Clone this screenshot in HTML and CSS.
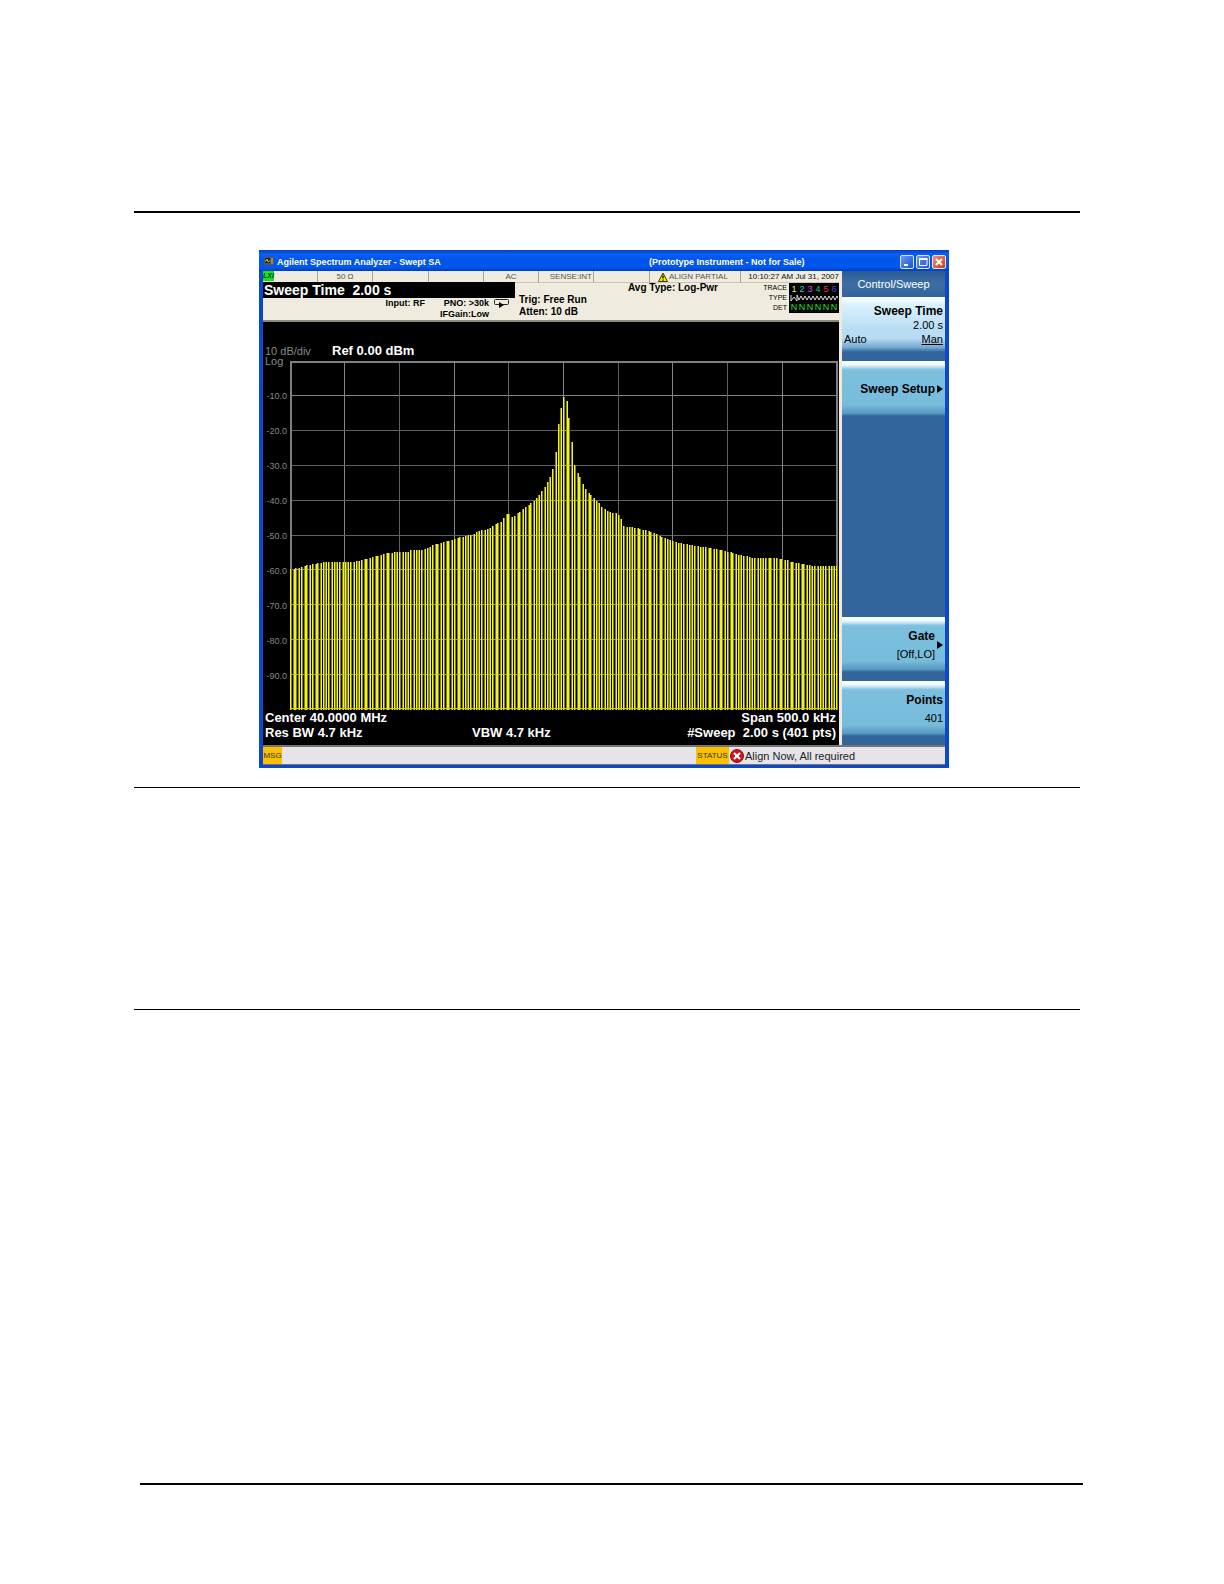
FILE: index.html
```html
<!DOCTYPE html>
<html lang="en">
<head>
<meta charset="utf-8">
<title>Agilent Spectrum Analyzer - Swept SA</title>
<link rel="stylesheet" href="styles.css">
</head>
<body>
<main class="page">
  <section class="figure">
    <div class="window">
      <header class="titlebar">
        <svg class="app-icon" viewBox="0 0 10 9" aria-hidden="true"><rect width="10" height="8" rx="1" fill="#5c5848"/><rect x="1" y="1" width="5" height="5" fill="#20241c"/><path d="M1 4h1l1-2 1 3 1-1h1" stroke="#c8b850" fill="none"/><path d="M7 2h2M7 4h2M7 6h2" stroke="#b8b8a8"/></svg>
        <h1 class="title">Agilent Spectrum Analyzer - Swept SA</h1>
        <span class="subtitle">(Prototype Instrument - Not for Sale)</span>
        <div class="win-buttons">
          <button class="win-btn" aria-label="Minimize"><svg viewBox="0 0 12 12"><path d="M3 9h4" stroke="#fff" stroke-width="2"/></svg></button>
          <button class="win-btn" aria-label="Maximize"><svg viewBox="0 0 12 12"><path d="M2.500 2v7.500h7.500V3" stroke="#fff" fill="none"/><path d="M2 3h8.500" stroke="#fff" stroke-width="2"/></svg></button>
          <button class="win-btn win-close" aria-label="Close"><svg viewBox="0 0 12 12"><path d="M3 3l6 6M9 3l-6 6" stroke="#fff" stroke-width="2"/></svg></button>
        </div>
      </header>
      <div class="body">
        <div class="screen">
          <div class="status-row">
            <span class="cell lxi-cell"><b class="lxi">LXI</b></span>
            <span class="cell">50 Ω</span>
            <span class="cell"></span>
            <span class="cell"></span>
            <span class="cell">AC</span>
            <span class="cell cell-end">SENSE:INT</span>
            <span class="cell"></span>
            <span class="cell align"><svg class="warn" viewBox="0 0 10 10" aria-hidden="true"><path d="M5 1l4.500 8.500h-9z" fill="#f8ec00" stroke="#3a3800"/><path d="M5 3.500v3M5 7.500v1.200" stroke="#000" stroke-width="1.300"/></svg>ALIGN PARTIAL</span>
            <span class="cell clock">10:10:27 AM Jul 31, 2007</span>
          </div>
          <div class="info">
            <div class="left">
              <div class="active-fn">Sweep Time&nbsp; 2.00 s</div>
              <div class="input-row">
                <span class="input-rf">Input: RF</span>
                <span class="pno">PNO: &gt;30k<br>IFGain:Low</span>
                <svg class="loop" viewBox="0 0 17 10" aria-hidden="true"><rect x="1.500" y="1.500" width="14" height="5" rx="1" fill="none" stroke="#222"/><path d="M6 4l5 3-5 3z" fill="#000"/></svg>
              </div>
            </div>
            <div class="trig">Trig: Free Run<br>Atten: 10 dB</div>
            <div class="avg">Avg Type: Log-Pwr</div>
            <div class="trace-labels">TRACE<br>TYPE<br>DET</div>
            <div class="trace-box">
              <div class="trace-line"><span class="c1">1</span><span class="c2">2</span><span class="c3">3</span><span class="c4">4</span><span class="c5">5</span><span class="c6">6</span></div>
              <svg class="wave" viewBox="0 0 48 8" aria-hidden="true"><path d="M1 1v6l3-4 3 4V1M7 1l2 5 2-4 2 4 2-4 2 4 2-4 2 4 2-4 2 4 2-4 2 4 2-4 2 4 2-4 2 4 2-4 2 4 2-4 2 4 2-4 2 4" fill="none" stroke="#ddd"/></svg>
              <div class="trace-line det"><span>N</span><span>N</span><span>N</span><span>N</span><span>N</span><span>N</span></div>
            </div>
          </div>
          <div class="display">
            <div class="scale"><span class="div">10 dB/div</span><strong>Ref 0.00 dBm</strong></div>
            <div class="plot">
              <div class="axis"><span class="log">Log</span><span>-10.0</span><span>-20.0</span><span>-30.0</span><span>-40.0</span><span>-50.0</span><span>-60.0</span><span>-70.0</span><span>-80.0</span><span>-90.0</span></div>
              <svg class="graph" id="graph" viewBox="0 0 549 349" role="img" aria-label="Spectrum trace"></svg>
            </div>
            <div class="readout">
              <span>Center 40.0000 MHz</span><span></span><span class="end">Span 500.0 kHz</span>
              <span>Res BW 4.7 kHz</span><span>VBW 4.7 kHz</span><span class="end">#Sweep&nbsp; 2.00 s (401 pts)</span>
            </div>
          </div>
        </div>
        <nav class="softkeys">
          <h2 class="menu-title">Control/Sweep</h2>
          <button class="key key-active"><b>Sweep Time</b><span>2.00 s</span><span class="toggle"><span>Auto</span><u>Man</u></span></button>
          <button class="key key-single"><b>Sweep Setup</b><i class="arrow"></i></button>
          <button class="key key-gate"><span class="stack"><b>Gate</b><span>[Off,LO]</span></span><i class="arrow"></i></button>
          <button class="key key-points"><b>Points</b><span>401</span></button>
        </nav>
      </div>
      <footer class="statusbar">
        <span class="tag msg">MSG</span>
        <span class="tag status">STATUS</span>
        <svg class="error" viewBox="0 0 14 14" aria-hidden="true"><circle cx="7" cy="7" r="6.500" fill="#cc1420" stroke="#8c1018"/><path d="M4 4l6 6M10 4l-6 6" stroke="#fff" stroke-width="2"/></svg>
        <span>Align Now, All required</span>
      </footer>
    </div>
  </section>
  <section class="block"></section>
  <section class="rest"></section>
</main>
<footer class="page-foot"></footer>
<script src="script.js"></script>
</body>
</html>
```
FILE: styles.css
```css
* { box-sizing: border-box; }
body { margin: 0; background: #fff; color: #000; font-family: "Liberation Sans", Arial, sans-serif; }
button { border: 0; padding: 0; font: inherit; color: inherit; cursor: pointer; }
svg { display: block; }

.page { padding: 211px 144px 0 134px; }
.figure { border-top: 2px solid #000; padding: 37px 0 19px; }
.block { border-top: 1px solid #000; height: 222px; }
.rest { border-top: 1px solid #000; height: 474px; }
.page-foot { margin: 0 141px 0 140px; border-top: 2px solid #000; height: 99px; }

.window { max-width: 690px; margin: 0 auto 0 125px; background: #0c48cc; padding: 0 4px 3px; }
.titlebar { display: flex; align-items: center; height: 21px; margin: 0 -4px; padding: 2px 3px 0 5px; color: #fff; background: linear-gradient(#0640c0 0, #0a60f4 20%, #0054e8 50%, #0058f0 80%, #0040c0 100%); }
.app-icon { width: 10px; height: 9px; }
.title { flex: 0 0 372px; margin: 0 0 0 3px; font-size: 9px; line-height: 14px; }
.subtitle { flex: 1; font-weight: bold; font-size: 9px; line-height: 14px; }
.win-buttons { display: flex; gap: 2px; }
.win-btn { width: 14px; height: 14px; border: 1px solid #d8e4fc; border-radius: 2px; background: linear-gradient(135deg, #6c98f4, #1c50d0); }
.win-btn svg { width: 12px; height: 12px; }
.win-close { background: linear-gradient(135deg, #f09070, #d03c14); }

.body { display: flex; }
.screen { flex: 1; min-width: 0; padding-right: 3px; background: #efebde; }
.status-row { display: grid; grid-template-columns: 55fr 55fr 56fr 55fr 55fr 55fr 56fr 91fr 98fr; height: 11px; font-size: 8px; line-height: 11px; color: #555; }
.cell { min-width: 0; border-right: 1px solid #a8a498; border-bottom: 1px solid #c8c4b8; text-align: center; white-space: nowrap; }
.cell:last-child { border-right: 0; }
.cell-end { text-align: right; padding-right: 1px; }
.lxi-cell { text-align: left; }
.lxi { display: block; width: 11px; height: 10px; background: #18e020; color: #042; font-style: italic; font-size: 7px; line-height: 10px; }
.align { display: flex; align-items: center; padding-left: 8px; }
.warn { width: 10px; height: 10px; margin-right: 1px; }
.clock { color: #111; text-align: right; }

.info { display: flex; height: 40px; border-bottom: 2px solid #8c887c; font-weight: bold; font-size: 10px; line-height: 12px; white-space: nowrap; }
.left { flex: 0 0 252px; }
.active-fn { height: 16px; padding-left: 1px; background: #000; color: #fff; font-size: 14px; line-height: 16px; }
.input-row { display: flex; gap: 4px; font-size: 9px; line-height: 11px; }
.input-rf { flex: 0 0 162px; text-align: right; }
.pno { flex: 1; text-align: right; }
.loop { width: 17px; height: 10px; margin: 0 5px 0 0; }
.trig { flex: 0 0 113px; padding: 12px 0 0 4px; }
.avg { flex: 1; }
.trace-labels { padding: 1px 2px 0 0; text-align: right; font-weight: normal; font-size: 7px; line-height: 10px; }
.trace-box { width: 50px; height: 30px; margin-top: 1px; padding: 1px; background: #000; }
.trace-line { display: grid; grid-template-columns: repeat(6, 1fr); height: 10px; text-align: center; font-weight: normal; font-size: 9px; line-height: 10px; }
.wave { width: 48px; height: 8px; }
.det { color: #20e030; }
.c1 { color: #f0f040; }
.c2 { color: #30d0c0; }
.c3 { color: #e040e0; }
.c4 { color: #30c080; }
.c5 { color: #f03040; }
.c6 { color: #4848d8; }

.display { background: #000; color: #fff; }
.scale { display: flex; align-items: center; height: 39px; padding: 18px 0 0 2px; font-size: 13px; }
.div { flex: 0 0 67px; color: #888; font-size: 11px; }
.plot { display: flex; }
.axis { flex: 0 0 27px; display: flex; flex-direction: column; margin: -18px 0 17px; padding: 0 3px 0 2px; color: #888; font-size: 9px; text-align: right; }
.axis span { flex: 1; display: flex; align-items: center; justify-content: flex-end; }
.axis .log { justify-content: flex-start; font-size: 11px; }
.graph { flex: 1; min-width: 0; }
.readout { display: grid; grid-template-columns: 207px 1fr 1fr; padding: 0 3px 5px 2px; font-weight: bold; font-size: 13px; line-height: 15px; white-space: nowrap; }
.readout .end { text-align: right; }
.readout > :last-child { margin-left: -50px; }

.softkeys { flex: 0 0 103px; display: flex; flex-direction: column; background: #31659c; font-size: 11px; }
.menu-title { margin: 0; height: 26px; color: #fff; font-size: 11px; font-weight: normal; line-height: 26px; text-align: center; background: linear-gradient(#2c5c94, #3c6ea4 50%, #31659c); }
.key { display: flex; flex-direction: column; align-items: flex-end; height: 55px; margin-bottom: 9px; padding: 7px 2px 0; color: #000; line-height: 14px; background: linear-gradient(#fff 0, #f0f8fc 7%, #7cc0e0 16%, #78bcdc 80%, #5898c0 95%, #31659c 100%); }
.key b { font-size: 12px; }
.key-active { background: linear-gradient(#fff 0, #d8f0fc 16%, #b8dcf4 60%, #b8dcf4 75%, #70a8d0 92%, #31659c 100%); }
.toggle { display: flex; justify-content: space-between; align-self: stretch; }
.key-single { flex-direction: row; align-items: center; justify-content: flex-end; gap: 2px; padding-top: 1px; }
.arrow { width: 0; height: 0; border-left: 6px solid #000; border-top: 4px solid transparent; border-bottom: 4px solid transparent; }
.key-gate { flex-direction: row; align-items: center; justify-content: flex-end; gap: 2px; margin-top: auto; padding-top: 0; }
.stack { display: flex; flex-direction: column; align-items: flex-end; line-height: 18px; }
.key-points { padding-top: 10px; line-height: 18px; }

.statusbar { display: flex; align-items: center; height: 20px; border-top: 2px solid #77756f; border-bottom: 1px solid #77756f; background: #e6e4e8; font-size: 11px; color: #222; }
.tag { align-self: stretch; background: #fcc000; color: #332; font-size: 8px; line-height: 17px; text-align: center; }
.msg { width: 19px; margin-right: auto; }
.status { flex: 0 0 33px; }
.error { width: 14px; height: 14px; margin: 0 1px; }
.statusbar > :last-child { flex: 0 0 200px; }
```
FILE: script.js
```js
// Trace envelope as [x, y] pairs in graph units
const env = [[0,208],[8,207],[17,204],[36,201],[60,201],[72,199],[85,195],[97,192],[107,191],[118,191],[120,189],[132,189],[143,184],[160,179],[170,176],[183,173],[188,170],[198,168],[205,163],[210,161],[214,155],[217,152],[219,153],[221,156],[225,154],[232,148],[238,144],[245,138],[251,130],[255,125],[257,121],[260,114],[263,105],[265,91],[268,63],[271,39],[273,36],[276,40],[279,65],[282,89],[284,104],[287,112],[290,118],[292,123],[295,128],[298,132],[301,135],[304,138],[308,142],[312,147],[318,151],[326,152],[328,154],[331,160],[333,165],[345,167],[358,170],[372,176],[383,180],[393,183],[413,186],[430,189],[443,192],[447,194],[458,195],[462,197],[485,197],[497,199],[500,201],[508,202],[523,205],[548,205]];
const svg = document.getElementById("graph");
const rect = (x, y, w, h, fill) => `<rect x="${x}" y="${y}" width="${w}" height="${h}" fill="${fill}"/>`;
const level = x => {
  let i = 1;
  while (i < env.length - 1 && env[i][0] < x) i++;
  const [x0, y0] = env[i - 1], [x1, y1] = env[i];
  return Math.round(y0 + (y1 - y0) * (x - x0) / (x1 - x0));
};
let out = "";
for (let k = 1; k < 10; k++) {
  out += rect(Math.floor(k * 54.7), 0, 1, 348, k % 2 ? "#858585" : "#606060");
  out += rect(0, Math.floor(k * 34.8), 547, 1, k === 1 ? "#858585" : "#606060");
}
out += rect(0, 0, 548, 2, "#808080") + rect(0, 0, 2, 348, "#808080") + rect(546, 0, 2, 348, "#808080");
for (let i = 0; i <= 200; i++) {
  const x = Math.round(i * 2.73), y = level(x);
  out += rect(x, y, 2, 349 - y, "#858500");
  out += rect(x + i % 2, y, 1, 349 - y, "#f2f22c");
}
for (let k = 1; k < 10; k++) {
  const y = Math.floor(k * 34.8);
  const hit = [];
  for (let x = 0; x < 547; x++) if (level(x) < y) hit.push(x);
  if (hit.length) out += rect(hit[0], y, hit[hit.length - 1] - hit[0], 1, "rgba(200,200,90,.6)");
}
out += rect(0, 347, 547, 1, "#d8c820");
svg.setAttribute("shape-rendering", "crispEdges");
svg.innerHTML = out;
```
